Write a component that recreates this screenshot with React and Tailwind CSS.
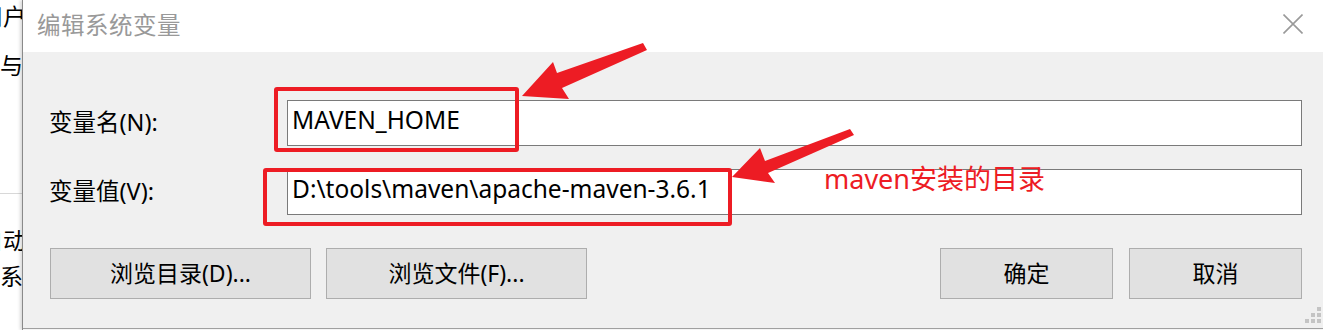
import React from 'react';

const font = { fontFamily: '"Noto Sans", "Noto Sans CJK SC", sans-serif' };

const Field = ({ label, value }) => (
  <div className="flex items-center h-[46px]">
    <div className="w-[238px] text-[23.5px] text-black">{label}</div>
    <div className="flex-1 h-[46px] bg-white border border-[#7a7a7a] flex items-center pl-[4px] pb-[5px] text-[24.5px] text-black">
      {value}
    </div>
  </div>
);

const Btn = ({ children, className = '' }) => (
  <button className={`h-[51px] bg-[#e1e1e1] border border-[#adadad] text-[23px] text-black flex items-center justify-center ${className}`}>
    {children}
  </button>
);

const App = () => {
  return (
    <div className="relative w-[1323px] h-[330px] flex bg-white overflow-hidden" style={font}>
      {/* window behind the dialog */}
      <div className="w-[22px] shrink-0 overflow-hidden text-[23px] leading-none text-black">
        <div className="mt-[5px] ml-[-20px] whitespace-nowrap">用户</div>
        <div className="mt-[26px] whitespace-nowrap">与变</div>
        <div className="mt-[116px] border-t border-[#d8d8d8]" />
        <div className="mt-[35px] ml-[-20px] whitespace-nowrap">自动</div>
        <div className="mt-[13px] whitespace-nowrap">系统</div>
      </div>

      {/* dialog */}
      <div className="flex-1 flex flex-col border-l border-[#8a8a8a] shadow-[-2px_0_3px_rgba(0,0,0,0.15)]">
        <div className="h-[52px] bg-white flex items-center justify-between pl-[14px] pr-[20px]">
          <span className="text-[23.5px] text-[#999999] tracking-[0.5px]">编辑系统变量</span>
          <svg width="20" height="20" viewBox="0 0 20 20" className="mb-[4px]">
            <path d="M0.5 0.5 L19.5 19.5 M19.5 0.5 L0.5 19.5" stroke="#9a9a9a" strokeWidth="1.6" fill="none" />
          </svg>
        </div>

        <div className="relative flex-1 bg-[#f0f0f0] flex flex-col pl-[26px] pr-[21px] pt-[48px] border-b border-[#a0a0a0]">
          <div className="flex flex-col gap-[23px]">
            <Field label="变量名(N):" value="MAVEN_HOME" />
            <Field label="变量值(V):" value="D:\tools\maven\apache-maven-3.6.1" />
          </div>

          <div className="flex mt-[33px] ml-px">
            <Btn className="w-[261px]">浏览目录(D)...</Btn>
            <Btn className="w-[261px] ml-[15px]">浏览文件(F)...</Btn>
            <Btn className="w-[173px] ml-auto">确定</Btn>
            <Btn className="w-[173px] ml-[16px]">取消</Btn>
          </div>

          {/* resize grip */}
          <div className="absolute right-[2px] bottom-[5px] grid grid-cols-3 gap-[2px]">
            <span className="w-[4px] h-[4px]" />
            <span className="w-[4px] h-[4px]" />
            <span className="w-[4px] h-[4px] bg-[#c4c4c4]" />
            <span className="w-[4px] h-[4px]" />
            <span className="w-[4px] h-[4px] bg-[#c4c4c4]" />
            <span className="w-[4px] h-[4px] bg-[#c4c4c4]" />
            <span className="w-[4px] h-[4px] bg-[#c4c4c4]" />
            <span className="w-[4px] h-[4px] bg-[#c4c4c4]" />
            <span className="w-[4px] h-[4px] bg-[#c4c4c4]" />
          </div>
        </div>
        <div className="h-[1px] bg-[#f5f5f5]" />
      </div>

      {/* annotations */}
      <div className="absolute left-[274px] top-[87px] w-[245px] h-[65px] border-[4px] border-[#ed1c24] rounded-[3px]" />
      <div className="absolute left-[263px] top-[168px] w-[469px] h-[58px] border-[4px] border-[#ed1c24] rounded-[3px]" />
      <svg className="absolute left-0 top-0" width="1323" height="330">
        <polygon points="643,43 557,73 553,62 522,96 569,99 562,88 647,50" fill="#ed1c24" />
        <polygon points="850,129 765,161 760,148 732,177 775,183 768,173 854,135" fill="#ed1c24" />
      </svg>
      <div className="absolute left-[824px] top-[165px] text-[27px] leading-none text-[#ed1c24]">maven安装的目录</div>
    </div>
  );
};

export default App;
